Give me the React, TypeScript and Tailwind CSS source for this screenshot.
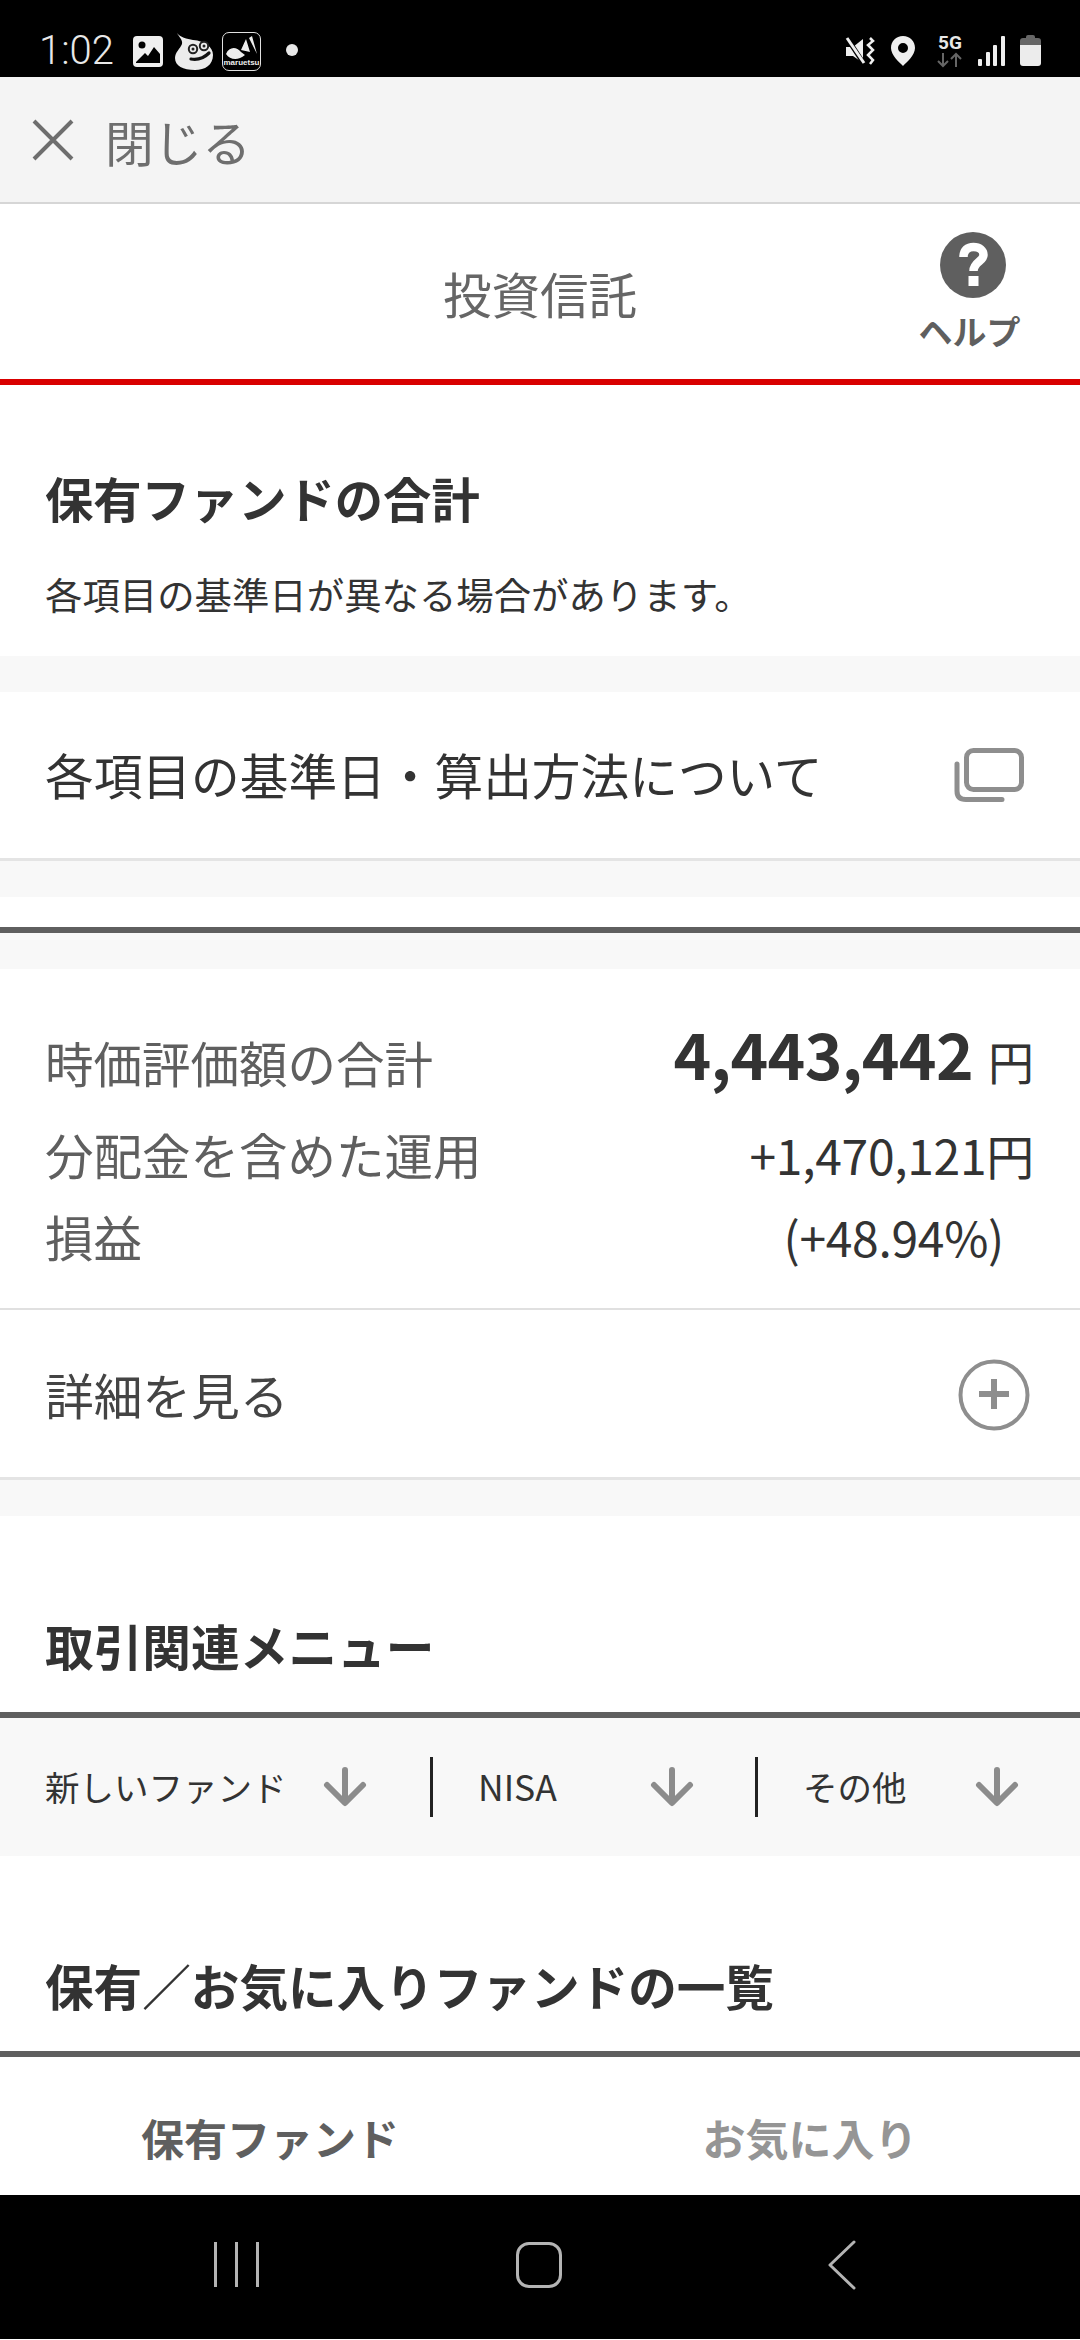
const jp = "font-['Noto_Sans_CJK_JP','Noto_Sans',sans-serif]";

function Arrow() {
  return (
    <svg width="44" height="40" viewBox="0 0 44 40" className="shrink-0">
      <path d="M22 3V35M4 18L22 36L40 18" fill="none" stroke="#8c8c8c" strokeWidth="6" strokeLinecap="round" strokeLinejoin="round" />
    </svg>
  );
}

function StatusBar() {
  return (
    <div className="h-[77px] bg-black relative shrink-0">
      <div className="absolute left-[39px] top-[28px] text-[40px] leading-[46px] text-[#e8e8e8] font-['Roboto',sans-serif] font-light">1:02</div>
      <svg className="absolute left-[133px] top-[36px]" width="30" height="31" viewBox="0 0 30 31">
        <rect width="30" height="31" rx="4" fill="#efefef" />
        <circle cx="9" cy="9" r="3.5" fill="#000" />
        <path d="M3 26L12 17L15 20L21 11L27 18V27H3Z" fill="#000" />
      </svg>
      <svg className="absolute left-[175px] top-[32px]" width="39" height="39" viewBox="0 0 39 39">
        <path d="M2 1C5 5 12 7 18 8C30 9 38 15 38 23C38 33 30 38 20 38C8 38 0 34 0 26C0 20 5 17 7 12C8 8 4 5 2 1Z" fill="#ececec" />
        <circle cx="18" cy="17" r="4.2" fill="#ececec" stroke="#222" strokeWidth="2" />
        <circle cx="29" cy="14" r="4.2" fill="#ececec" stroke="#222" strokeWidth="2" />
        <circle cx="18" cy="17" r="1.5" fill="#222" />
        <circle cx="29" cy="14" r="1.5" fill="#222" />
        <path d="M16 27C22 28 29 26 34 21" fill="none" stroke="#111" strokeWidth="3.2" strokeLinecap="round" />
      </svg>
      <div className="absolute left-[222px] top-[32px] w-[39px] h-[39px] rounded-[7px] border border-[#e0e0e0] bg-black overflow-hidden">
        <svg width="37" height="28" viewBox="0 0 37 28" className="absolute left-0 top-0">
          <path d="M3 21C6 14 13 13 18 19L22 22C15 28 7 27 3 21Z" fill="#eee" />
          <path d="M18 17L23 6L27 19ZM26 5L29 3L34 21Z" fill="#eee" />
        </svg>
        <div className="absolute left-0 right-0 bottom-[3px] text-center text-[8px] leading-[9px] font-bold text-[#eee] font-['Liberation_Sans',sans-serif]">maruetsu</div>
      </div>
      <div className="absolute left-[286px] top-[44px] w-[12px] h-[12px] rounded-full bg-[#e8e8e8]" />
      <svg className="absolute left-[845px] top-[36px]" width="30" height="30" viewBox="0 0 30 30">
        <path d="M1 11H8L18 3V27L8 20H1Z" fill="#efefef" />
        <path d="M2 2L19 28" stroke="#000" strokeWidth="5" />
        <path d="M2 2L19 27" stroke="#efefef" strokeWidth="3" />
        <path d="M25 2L28 5L23 9L28 14L23 19L28 24L25 28" fill="none" stroke="#efefef" strokeWidth="2.5" />
      </svg>
      <svg className="absolute left-[891px] top-[36px]" width="24" height="30" viewBox="0 0 24 30">
        <path fillRule="evenodd" d="M12 0C19 0 24 5 24 12C24 19 16 26 12 30C8 26 0 19 0 12C0 5 5 0 12 0ZM12 7A5 5 0 1 0 12 17A5 5 0 1 0 12 7Z" fill="#efefef" />
      </svg>
      <div className="absolute left-[936px] top-[33px] w-[28px] text-center text-[19px] leading-[19px] font-bold text-[#e8e8e8] font-['Roboto',sans-serif]">5G</div>
      <svg className="absolute left-[937px] top-[52px]" width="26" height="16" viewBox="0 0 26 16">
        <path d="M6 1V14M1 9L6 14L11 9" fill="none" stroke="#666" strokeWidth="2" />
        <path d="M19 15V2M14 7L19 2L24 7" fill="none" stroke="#666" strokeWidth="2" />
      </svg>
      <svg className="absolute left-[977px] top-[36px]" width="28" height="30" viewBox="0 0 28 30">
        <rect x="1" y="23" width="4" height="7" rx="1" fill="#efefef" />
        <rect x="9" y="16" width="4" height="14" rx="1" fill="#efefef" />
        <rect x="16" y="9" width="4" height="21" rx="1" fill="#efefef" />
        <rect x="24" y="0" width="4" height="30" rx="1" fill="#efefef" />
      </svg>
      <svg className="absolute left-[1020px] top-[35px]" width="21" height="31" viewBox="0 0 21 31">
        <path d="M6 2Q6 0 8 0H13Q15 0 15 2V3H18Q21 3 21 6V10H0V6Q0 3 3 3H6Z" fill="#666" />
        <path d="M0 10H21V28Q21 31 18 31H3Q0 31 0 28Z" fill="#ececec" />
      </svg>
    </div>
  );
}

function NavBar() {
  return (
    <div className="h-[144px] bg-black shrink-0 relative">
      <div className="absolute left-[214px] top-[47px] flex gap-[18px]">
        <div className="w-[3px] h-[45px] bg-[#b4b4b4]" />
        <div className="w-[3px] h-[45px] bg-[#b4b4b4]" />
        <div className="w-[3px] h-[45px] bg-[#b4b4b4]" />
      </div>
      <div className="absolute left-[516px] top-[47px] w-[40px] h-[40px] rounded-[13px] border-[3px] border-[#b4b4b4] box-content" />
      <svg className="absolute left-[828px] top-[45px]" width="28" height="50" viewBox="0 0 28 50">
        <path d="M26 2L2 25L26 48" fill="none" stroke="#b4b4b4" strokeWidth="3" strokeLinecap="round" strokeLinejoin="round" />
      </svg>
    </div>
  );
}

export default function App() {
  return (
    <div className={`w-[1080px] h-[2340px] overflow-hidden bg-white flex flex-col ${jp}`}>
      <StatusBar />

      <div className="h-[127px] shrink-0 bg-[#f4f4f4] border-b-2 border-[#d6d6d6] flex items-center pl-[32px] gap-[31px]">
        <svg width="42" height="42" viewBox="0 0 42 42">
          <path d="M2 2L40 40M40 2L2 40" stroke="#6e6e6e" strokeWidth="4" />
        </svg>
        <span className="text-[48.7px] leading-[60px] text-[#6e6e6e] pt-[3px]">閉じる</span>
      </div>

      <div className="h-[175px] shrink-0 bg-white relative flex items-center justify-center">
        <span className="text-[48.5px] leading-[60px] text-[#666666] pt-[3px]">投資信託</span>
        <div className="absolute left-[923px] top-[28px] w-[100px] flex flex-col items-center">
          <svg width="66" height="66" viewBox="0 0 66 66">
            <circle cx="33" cy="33" r="33" fill="#5f5f5f" />
            <path d="M23.5 25C23.5 18 27.5 15 33.5 15C39.5 15 43.5 18.5 43.5 23C43.5 29.5 33.5 30 33.5 39" fill="none" stroke="#fff" strokeWidth="8.5" />
            <rect x="28.5" y="44" width="10" height="10" fill="#fff" />
          </svg>
          <span className="text-[34px] leading-[44px] mt-[11px] -ml-[7px] font-bold text-[#5f5f5f] whitespace-nowrap">ヘルプ</span>
        </div>
      </div>
      <div className="h-[6px] shrink-0 bg-[#d90000]" />

      <div className="h-[271px] shrink-0 bg-white px-[45px] pt-[78px]">
        <h2 className="text-[48.3px] leading-[68px] font-bold text-[#333333]">保有ファンドの合計</h2>
        <p className="text-[37.4px] leading-[52px] mt-[37px] text-[#333333] whitespace-nowrap">各項目の基準日が異なる場合があります。</p>
      </div>
      <div className="h-[36px] shrink-0 bg-[#f8f8f8]" />

      <div className="h-[169px] shrink-0 bg-white border-b-[3px] border-[#e4e4e4] flex items-center justify-between pl-[45px] pr-[56px]">
        <span className="text-[48.7px] leading-[60px] text-[#333333] whitespace-nowrap pb-[3px]">各項目の基準日・算出方法について</span>
        <svg width="70" height="54" viewBox="0 0 70 54">
          <rect x="12.5" y="2.5" width="55" height="39" rx="7" fill="none" stroke="#8e8e8e" strokeWidth="5" />
          <path d="M3 16V43Q3 51.5 12 51.5H48" fill="none" stroke="#8e8e8e" strokeWidth="5" strokeLinecap="round" />
        </svg>
      </div>
      <div className="h-[36px] shrink-0 bg-[#f8f8f8]" />
      <div className="h-[30px] shrink-0 bg-white" />
      <div className="h-[6px] shrink-0 bg-[#5f5f5f]" />
      <div className="h-[36px] shrink-0 bg-[#f8f8f8]" />

      <div className="h-[341px] shrink-0 bg-white border-b-[2px] border-[#e0e0e0] pl-[45px] pr-[46px] pt-[61px]">
        <div className="flex items-center justify-between h-[64px]">
          <span className="text-[48.5px] leading-[60px] text-[#5f5f5f]">時価評価額の合計</span>
          <span className="flex items-baseline -mt-[10px]">
            <span className="text-[64px] leading-[64px] font-bold text-[#333333] tracking-[-0.7px]">4,443,442</span>
            <span className="text-[46px] ml-[15px] text-[#333333]">円</span>
          </span>
        </div>
        <div className="flex justify-between mt-[19px]">
          <span className="text-[48.5px] leading-[82px] text-[#5f5f5f] w-[500px]">分配金を含めた運用<br />損益</span>
          <span className="text-[48px] leading-[82px] text-right text-[#333333] whitespace-nowrap tracking-[-0.3px]">
            +1,470,121円<br /><span className="pr-[30px]">(+48.94%)</span>
          </span>
        </div>
      </div>

      <div className="h-[170px] shrink-0 bg-white border-b-[3px] border-[#e4e4e4] flex items-center justify-between pl-[45px] pr-[50px]">
        <span className="text-[48.7px] leading-[60px] text-[#444444]">詳細を見る</span>
        <svg width="72" height="72" viewBox="0 0 72 72" className="mt-[2px]">
          <circle cx="36" cy="36" r="33.5" fill="none" stroke="#8e8e8e" strokeWidth="4" />
          <path d="M36 20V50M21 35H51" stroke="#8e8e8e" strokeWidth="6" />
        </svg>
      </div>
      <div className="h-[36px] shrink-0 bg-[#f8f8f8]" />

      <div className="h-[196px] shrink-0 bg-white px-[45px] pt-[95px]">
        <h2 className="text-[48.7px] leading-[68px] font-bold text-[#333333]">取引関連メニュー</h2>
      </div>
      <div className="h-[6px] shrink-0 bg-[#5f5f5f]" />

      <div className="h-[138px] shrink-0 bg-[#f8f8f8] flex items-center text-[#333333]">
        <div className="w-[433px] h-[60px] border-r-[3px] border-[#222222] flex items-center justify-between pl-[45px] pr-[63px]">
          <span className="text-[34.5px] leading-[48px] whitespace-nowrap pb-[2px]">新しいファンド</span>
          <Arrow />
        </div>
        <div className="w-[325px] h-[60px] border-r-[3px] border-[#222222] flex items-center justify-between pl-[45px] pr-[61px]">
          <span className="text-[35.5px] leading-[48px] pb-[2px]">NISA</span>
          <Arrow />
        </div>
        <div className="w-[322px] h-[60px] flex items-center justify-between pl-[45px] pr-[61px]">
          <span className="text-[34.5px] leading-[48px] pb-[2px]">その他</span>
          <Arrow />
        </div>
      </div>

      <div className="h-[195px] shrink-0 bg-white px-[45px] pt-[95px]">
        <h2 className="text-[48.6px] leading-[68px] font-bold text-[#333333] whitespace-nowrap">保有／お気に入りファンドの一覧</h2>
      </div>
      <div className="h-[6px] shrink-0 bg-[#5f5f5f]" />

      <div className="h-[138px] shrink-0 bg-white flex">
        <div className="w-[540px] flex items-center justify-center text-[43px] leading-[56px] font-bold text-[#5f5f5f] pt-[22px]">保有ファンド</div>
        <div className="w-[540px] flex items-center justify-center text-[43px] leading-[56px] font-bold text-[#959595] pt-[22px]">お気に入り</div>
      </div>

      <NavBar />
    </div>
  );
}
